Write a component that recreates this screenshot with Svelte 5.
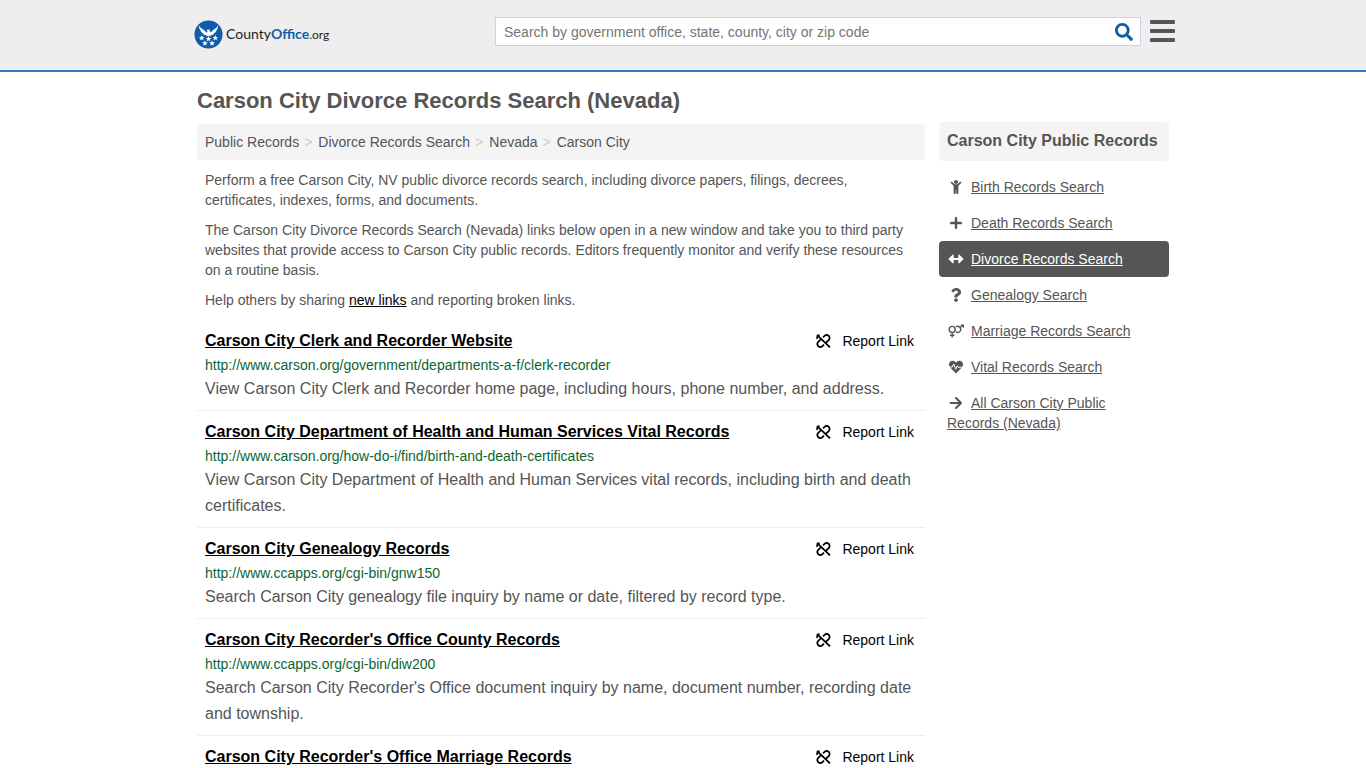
<script lang="ts">
  type Category = { icon: string; label: string; active?: boolean };
  type Resource = { title: string; url?: string; text?: string };

  let query = $state('');

  const crumbs = ['Public Records', 'Divorce Records Search', 'Nevada', 'Carson City'];

  const resources: Resource[] = [
    {
      title: 'Carson City Clerk and Recorder Website',
      url: 'http://www.carson.org/government/departments-a-f/clerk-recorder',
      text: 'View Carson City Clerk and Recorder home page, including hours, phone number, and address.',
    },
    {
      title: 'Carson City Department of Health and Human Services Vital Records',
      url: 'http://www.carson.org/how-do-i/find/birth-and-death-certificates',
      text: 'View Carson City Department of Health and Human Services vital records, including birth and death certificates.',
    },
    {
      title: 'Carson City Genealogy Records',
      url: 'http://www.ccapps.org/cgi-bin/gnw150',
      text: 'Search Carson City genealogy file inquiry by name or date, filtered by record type.',
    },
    {
      title: "Carson City Recorder's Office County Records",
      url: 'http://www.ccapps.org/cgi-bin/diw200',
      text: "Search Carson City Recorder's Office document inquiry by name, document number, recording date and township.",
    },
    { title: "Carson City Recorder's Office Marriage Records" },
  ];

  const categories: Category[] = [
    { icon: 'child', label: 'Birth Records Search' },
    { icon: 'plus', label: 'Death Records Search' },
    { icon: 'arrows', label: 'Divorce Records Search', active: true },
    { icon: 'question', label: 'Genealogy Search' },
    { icon: 'marriage', label: 'Marriage Records Search' },
    { icon: 'heart', label: 'Vital Records Search' },
    { icon: 'arrow', label: 'All Carson City Public Records (Nevada)' },
  ];
</script>

{#snippet icon(name: string)}
  <svg class="icon" viewBox="0 0 18 14" aria-hidden="true">
    {#if name === 'child'}
      <path
        transform="translate(3.75) scale(0.02734)"
        d="M120 72c0-39.765 32.235-72 72-72s72 32.235 72 72c0 39.764-32.235 72-72 72s-72-32.236-72-72zm254.627 1.373c-12.496-12.497-32.758-12.497-45.254 0L242.745 160H141.254L54.627 73.373c-12.496-12.497-32.758-12.497-45.254 0-12.497 12.497-12.497 32.758 0 45.255L104 213.254V480c0 17.673 14.327 32 32 32h16c17.673 0 32-14.327 32-32V368h16v112c0 17.673 14.327 32 32 32h16c17.673 0 32-14.327 32-32V213.254l94.627-94.627c12.497-12.497 12.497-32.757 0-45.254z"
      />
    {:else if name === 'plus'}
      <path class="line bold" d="M9 2.2v9.6M4.2 7h9.6" />
    {:else if name === 'arrows'}
      <path
        d="M5.4 2.9c.7-.6 1.3-.2 1.3.5v2.5h4.6V3.4c0-.7.6-1.1 1.3-.5l3.6 3.6c.3.3.3.7 0 1l-3.6 3.6c-.7.6-1.3.2-1.3-.5V8.1H6.7v2.5c0 .7-.6 1.1-1.3.5L1.8 7.5c-.3-.3-.3-.7 0-1z"
      />
    {:else if name === 'question'}
      <path
        transform="translate(3.75) scale(0.02734)"
        d="M202.021 0C122.202 0 70.503 32.703 29.914 91.026c-7.363 10.58-5.093 25.086 5.178 32.874l43.138 32.709c10.373 7.865 25.132 6.026 33.253-4.148 25.049-31.381 43.63-49.449 82.757-49.449 30.764 0 68.816 19.799 68.816 49.631 0 22.552-18.617 34.134-48.993 51.164-35.423 19.86-82.299 44.576-82.299 106.405V320c0 13.255 10.745 24 24 24h72.471c13.255 0 24-10.745 24-24v-5.773c0-42.86 125.268-44.645 125.268-160.627C377.504 66.256 286.902 0 202.021 0zM192 373.459c-38.196 0-69.271 31.075-69.271 69.271 0 38.195 31.075 69.27 69.271 69.27s69.271-31.075 69.271-69.271-31.075-69.27-69.271-69.27z"
      />
    {:else if name === 'marriage'}
      <g class="thin">
        <circle cx="5.2" cy="5.4" r="3" />
        <path d="M5.2 8.4v5M3 11.2h4.4M9 2.9a3 3 0 1 1 0 5M13.2 3.6l2.9-2.6M13.8 1.2h2.6v2.6" />
      </g>
    {:else if name === 'heart'}
      <path d="M9 13.4L2.9 7.3C1.5 5.8 1.6 3.2 3.1 1.8 4.8.3 7.1.6 8.4 2L9 2.7 9.6 2c1.3-1.4 3.6-1.7 5.3-.2 1.5 1.4 1.6 4 .2 5.5z" />
      <path class="pulse" d="M2 7h3.3l1.4-3 2 5.2 1.6-3.4.7 1.4H16" />
    {:else}
      <path class="line" d="M3.5 7h10.2M9 2l5 5-5 5" />
    {/if}
  </svg>
{/snippet}

<header>
  <div class="bar">
    <a class="logo" href="/" aria-label="CountyOffice.org">
      <svg class="seal" viewBox="0 0 30 30" aria-hidden="true">
        <circle cx="15" cy="15" r="14.5" fill="#0f5cab" />
        <path
          fill="#fff"
          d="M5 5.5c1.5 3 4.4 4.2 6.6 6.1l1.8 1.5.6-1.5-1-.9 1.2-1 1.9.4.5 1.5.4 1.4 1.5-1.4c2.2-1.9 5-3.1 6.5-6.1.1 2.2-.5 3.8-1.6 4.8-.2 1.5-1.2 2.5-2.3 3.1-.6 1.3-1.6 2.1-2.8 2.1l-1.5.5.7 1.1-2.5-.7-2.5.7.7-1.1-1.5-.5c-1.2 0-2.2-.8-2.8-2.1-1.1-.6-2.1-1.6-2.3-3.1C5.5 9.300 4.900 7.700 5 5.500z"
        />
        {#each [[8, 18.5], [15, 19.5], [22, 18.5], [11.3, 24], [18.7, 24]] as [x, y]}
          <path
            fill="#fff"
            transform="translate({x} {y})"
            d="M0-2.9l.8 2h2.1L1.3.5l.6 2.1L0 1.4l-1.9 1.2.6-2.1-1.6-1.4h2.1z"
          />
        {/each}
      </svg>
      <span class="wordmark">County<b>Office</b><small>.org</small></span>
    </a>

    <form class="search" role="search" onsubmit={(e) => e.preventDefault()}>
      <input
        type="text"
        aria-label="Search"
        placeholder="Search by government office, state, county, city or zip code"
        bind:value={query}
      />
      <button type="submit" aria-label="Search">
        <svg viewBox="0 0 512 512" aria-hidden="true">
          <path
            d="M505 442.7L405.3 343c-4.5-4.5-10.6-7-17-7H372c27.6-35.3 44-79.7 44-128C416 93.1 322.9 0 208 0S0 93.1 0 208s93.1 208 208 208c48.3 0 92.7-16.4 128-44v16.3c0 6.4 2.5 12.5 7 17l99.7 99.7c9.4 9.4 24.6 9.4 33.9 0l28.3-28.3c9.4-9.4 9.4-24.6.1-34zM208 336c-70.7 0-128-57.2-128-128 0-70.7 57.2-128 128-128 70.7 0 128 57.2 128 128 0 70.7-57.2 128-128 128z"
          />
        </svg>
      </button>
    </form>

    <button class="menu" type="button" aria-label="Menu">
      <span></span>
      <span></span>
      <span></span>
    </button>
  </div>
</header>

<div class="page">
  <main>
    <h1>Carson City Divorce Records Search (Nevada)</h1>

    <nav class="crumbs" aria-label="Breadcrumb">
      {#each crumbs as crumb, i}
        {#if i > 0}<span>&gt;</span>{/if}
        <a href="#top">{crumb}</a>
      {/each}
    </nav>

    <div class="intro">
      <p>
        Perform a free Carson City, NV public divorce records search, including divorce papers,
        filings, decrees, certificates, indexes, forms, and documents.
      </p>
      <p>
        The Carson City Divorce Records Search (Nevada) links below open in a new window and take
        you to third party websites that provide access to Carson City public records. Editors
        frequently monitor and verify these resources on a routine basis.
      </p>
      <p>
        Help others by sharing <a href="#new">new links</a> and reporting broken links.
      </p>
    </div>

    <ul class="resources">
      {#each resources as resource}
        <li>
          <div class="title">
            <a href={resource.url ?? '#record'}>{resource.title}</a>
            <button type="button" class="report">
              <svg viewBox="0 0 16 16" aria-hidden="true">
                <path
                  d="M2 1.800L15 14.400M8 4.200l1.600-1.300a2.900 2.900 0 0 1 4.100 4.200l-2.600 2.500M9 11.600l-1.600 1.500a2.900 2.900 0 0 1-4.200-4.200l3.400-3.200M4.600 2.200c-2 .2-2.900 2-2.200 3.800"
                />
              </svg>
              Report Link
            </button>
          </div>
          {#if resource.url}
            <div class="url">{resource.url}</div>
            <p>{resource.text}</p>
          {/if}
        </li>
      {/each}
    </ul>
  </main>

  <aside>
    <h2>Carson City Public Records</h2>
    <ul>
      {#each categories as category}
        <li class:active={category.active}>
          {@render icon(category.icon)}<a href="#records">{category.label}</a>
        </li>
      {/each}
    </ul>
  </aside>
</div>

<style>
  :global(body) {
    background: #fff;
    color: #555;
    font: 14px/20px 'Liberation Sans', Arial, sans-serif;
  }

  a {
    color: inherit;
  }

  button {
    padding: 0;
    border: 0;
    background: none;
    font: inherit;
    cursor: pointer;
  }

  ul {
    margin: 0;
    padding: 0;
    list-style: none;
  }

  header {
    background: #eee;
    border-bottom: 2px solid #337ab7;
  }

  .bar {
    display: flex;
    align-items: flex-start;
    box-sizing: border-box;
    max-width: 984px;
    min-height: 70px;
    margin: 0 auto;
    padding: 17px 0 0 3px;
  }

  .logo {
    display: flex;
    align-items: center;
    gap: 3px;
    margin-top: 3px;
    color: #222;
    text-decoration: none;
  }

  .seal {
    width: 29px;
    height: 29px;
  }

  .wordmark {
    font: 14px/20px Lato, sans-serif;
  }

  .wordmark b {
    color: #0f5cab;
  }

  .wordmark small {
    font-size: 12px;
  }

  .search {
    display: flex;
    flex: 0 1 644px;
    height: 27px;
    margin-left: auto;
    border: 1px solid #c3d7e8;
    background: #fff;
  }

  .search input {
    flex: 1;
    min-width: 0;
    padding: 0 8px;
    border: 0;
    outline: 0;
    background: none;
    color: #555;
    font: inherit;
  }

  .search input::placeholder {
    color: #757575;
  }

  .search button {
    display: flex;
    align-items: center;
    padding: 0 7px;
  }

  .search svg {
    width: 18px;
    height: 18px;
    fill: #0f5cab;
  }

  .menu {
    display: flex;
    flex-direction: column;
    gap: 5px;
    width: 25px;
    margin: 3px 0 0 9px;
  }

  .menu span {
    width: 100%;
    height: 4px;
    border-radius: 1px;
    background: #555;
  }

  .page {
    display: flex;
    gap: 14px;
    max-width: 972px;
    margin: 0 auto;
  }

  main {
    flex: 1;
    min-width: 0;
  }

  h1 {
    margin: 17px 0 11px;
    font-size: 22px;
    line-height: 24px;
  }

  .crumbs {
    display: flex;
    gap: 5px;
    padding: 8px;
    border-radius: 4px;
    background: #f4f4f4;
  }

  .crumbs a {
    text-decoration: none;
  }

  .crumbs span {
    padding-right: 1px;
    color: #ccc;
  }

  .intro {
    padding: 0 8px;
  }

  .intro p {
    margin: 10px 0;
  }

  .intro a {
    color: #000;
  }

  .resources li {
    padding: 10px 8px 8px;
    border-bottom: 1px solid #eee;
  }

  .resources li:last-child {
    padding-bottom: 0;
    border-bottom: 0;
  }

  .title {
    display: flex;
    justify-content: space-between;
    color: #000;
    line-height: 22px;
  }

  .title a {
    font-size: 16px;
    font-weight: bold;
  }

  .report {
    display: flex;
    align-items: center;
    gap: 11px;
    padding-right: 3px;
    color: #000;
  }

  .report svg {
    width: 16px;
    height: 16px;
    fill: none;
    stroke: #000;
    stroke-width: 1.8;
  }

  .url {
    margin: 3px 0 1px;
    color: #0a6630;
  }

  .resources p {
    margin: 0;
    font-size: 16px;
    line-height: 26px;
  }

  aside {
    flex: 0 0 230px;
    margin-top: 50px;
  }

  h2 {
    margin: 0 0 8px;
    padding: 9px 8px 10px;
    border-radius: 4px;
    background: #f4f4f4;
    font-size: 16px;
    line-height: 20px;
  }

  aside li {
    padding: 8px;
    border-radius: 4px;
  }

  aside li.active {
    background: #555;
    color: #fff;
  }

  .icon {
    width: 18px;
    height: 14px;
    margin-right: 6px;
    vertical-align: -2px;
    fill: currentColor;
  }

  .line {
    fill: none;
    stroke: currentColor;
    stroke-width: 2;
    stroke-linecap: round;
    stroke-linejoin: round;
  }

  .line.bold {
    stroke-width: 2.4;
  }

  .thin {
    fill: none;
    stroke: currentColor;
    stroke-width: 1.4;
  }

  .pulse {
    fill: none;
    stroke: #fff;
    stroke-width: 1;
  }
</style>
